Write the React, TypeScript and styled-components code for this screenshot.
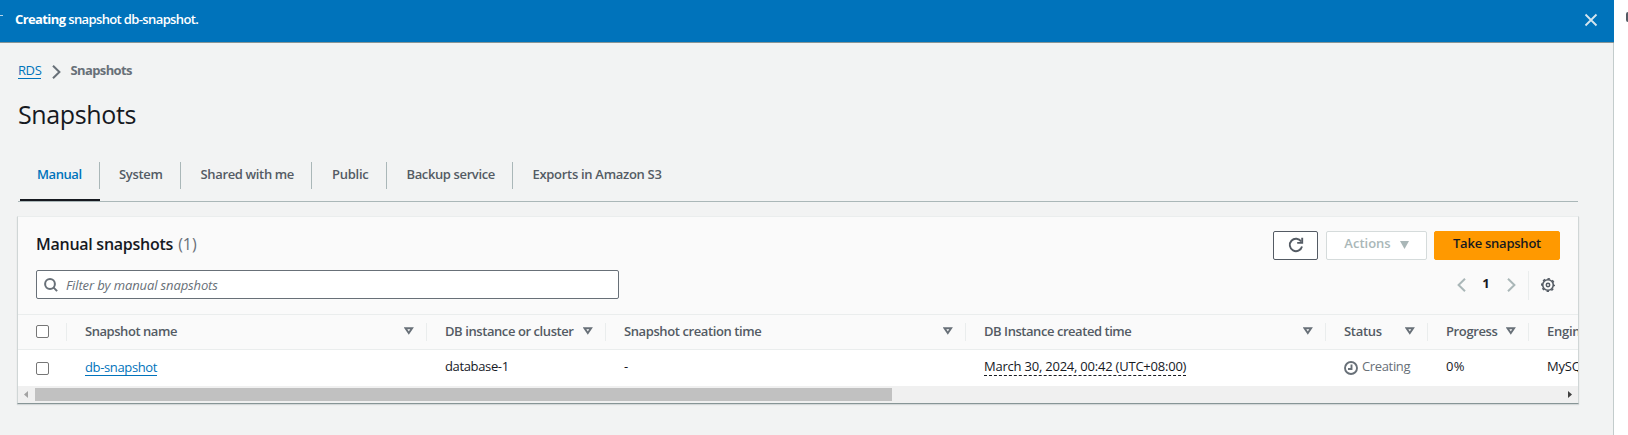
import React from "react";
import styled, { createGlobalStyle } from "styled-components";

const GlobalStyle = createGlobalStyle`
  * { box-sizing: border-box; }
  body {
    margin: 0;
    background: #fff;
    overflow: hidden;
    color: #16191f;
    font: 13px/20px "Open Sans", "Noto Sans", sans-serif;
  }
  svg { display: block; flex: none; }
`;

const Screen = styled.div`
  display: flex;
  width: 1628px;
  height: 435px;
  overflow: hidden;
`;

const Main = styled.main`
  width: 1614px;
  height: 435px;
  background: #f2f3f3;
  flex: none;
`;

const ToolRail = styled.aside`
  flex: 1;
  overflow: hidden;
  padding: 12px 0 0 12px;
`;

const Flash = styled.div`
  display: flex;
  align-items: center;
  justify-content: space-between;
  height: 43px;
  padding: 0 16px 3px 0;
  background: #0073bb;
  border-bottom: 1px solid #879596;
  color: #fff;
`;

const FlashMessage = styled.div`
  display: flex;
  align-items: center;
  padding-bottom: 1px;
`;

const Content = styled.div`
  height: 392px;
  padding: 17px 35px 0 17px;
  border-right: 1px solid #c3cccc;
`;

const Label = styled.span<{ $ls?: number; $weight?: number }>`
  letter-spacing: ${(p) => p.$ls ?? 0}px;
  font-weight: ${(p) => p.$weight ?? 400};
  white-space: pre;
`;

const Link = styled.a<{ $ls?: number }>`
  display: inline-block;
  height: 19px;
  letter-spacing: ${(p) => p.$ls ?? 0}px;
  color: #0073bb;
  line-height: 20px;
  text-decoration: none;
  border-bottom: 1px solid #0073bb;
`;

const Breadcrumbs = styled.nav`
  display: flex;
  align-items: flex-start;
  height: 20px;
  padding-left: 1px;
  color: #687078;
`;

const Separator = styled.span`
  padding: 5px 9px 0 11px;
`;

const Title = styled.h1`
  margin: 17px 0 0 1px;
  font-size: 25px;
  font-weight: 400;
  line-height: 34px;
  letter-spacing: -0.37px;
`;

const Tabs = styled.div`
  display: flex;
  align-items: flex-start;
  height: 51px;
  margin: 20px 0 0 1px;
  padding: 11px 0 0 2px;
  border-bottom: 1px solid #aab7b8;
`;

const Tab = styled.div<{ $width: number; $active?: boolean }>`
  width: ${(p) => p.$width}px;
  height: 39px;
  color: ${(p) => (p.$active ? "#0073bb" : "#545b64")};
  border-bottom: ${(p) => (p.$active ? "2px solid #16191f" : "none")};
`;

const TabFace = styled.div<{ $pad: number; $last?: boolean }>`
  height: 27px;
  padding-left: ${(p) => p.$pad}px;
  line-height: 24px;
  border-right: ${(p) => (p.$last ? "none" : "1px solid #aab7b8")};
`;

const Card = styled.section`
  width: 1562px;
  height: 188px;
  margin-top: 14px;
  background: #fafafa;
  border: 1px solid #d0d6d6;
  border-top-color: #eaeded;
  border-bottom-color: #879596;
  box-shadow: 0 1px 1px rgba(0, 28, 36, 0.12);
`;

const HeaderRow = styled.div<{ $height: number }>`
  display: flex;
  justify-content: space-between;
  align-items: flex-start;
  height: ${(p) => p.$height}px;
  padding: 0 18px 0 18px;
`;

const CardTitle = styled.h2`
  margin: 15px 0 0 0;
  font-size: 16px;
  line-height: 24px;
  font-weight: 600;
`;

const Count = styled.span`
  margin-left: 1px;
  color: #687078;
  font-weight: 400;
`;

const Actions = styled.div`
  display: flex;
  padding-top: 14px;
`;

const Button = styled.button<{ $width: number; $kind?: "primary" | "disabled"; $gap?: number }>`
  display: flex;
  align-items: center;
  justify-content: center;
  gap: 9px;
  width: ${(p) => p.$width}px;
  height: 29px;
  margin-left: ${(p) => p.$gap ?? 0}px;
  padding: 0 0 5px;
  font: inherit;
  border-radius: 2px;
  background: ${(p) => (p.$kind === "primary" ? "#ff9900" : "#fff")};
  border: 1px solid
    ${(p) => (p.$kind === "primary" ? "#ff9900" : p.$kind === "disabled" ? "#d5dbdb" : "#545b64")};
  color: ${(p) => (p.$kind === "primary" ? "#16191f" : p.$kind === "disabled" ? "#aab7b8" : "#545b64")};
`;

const ButtonIcon = styled.span<{ $drop: number }>`
  padding-top: ${(p) => p.$drop}px;
`;

const Search = styled.div`
  display: flex;
  align-items: center;
  gap: 8px;
  width: 583px;
  height: 29px;
  padding: 0 0 0 7px;
  border: 1px solid #687078;
  border-radius: 2px;
  background: #fff;
  color: #687078;
  font-style: italic;
`;

const Pager = styled.div`
  display: flex;
  align-items: center;
  height: 30px;
  padding-right: 5px;
`;

const PageNumber = styled.span`
  width: 41px;
  padding: 0 1px 4px 0;
  text-align: center;
  font-weight: 700;
`;

const PagerRule = styled.span`
  width: 1px;
  height: 29px;
  margin: 0 12px 0 12px;
  background: #eaeded;
`;

const TableRow = styled.div<{ $head?: boolean }>`
  display: flex;
  align-items: center;
  height: ${(p) => (p.$head ? 35 : 36)}px;
  overflow: hidden;
  background: ${(p) => (p.$head ? "#fafafa" : "#fff")};
  color: ${(p) => (p.$head ? "#545b64" : "#16191f")};
  border-top: ${(p) => (p.$head ? "1px solid #eaeded" : "none")};
`;

const Cell = styled.div<{ $width: number; $head?: boolean }>`
  display: flex;
  flex: none;
  align-items: center;
  justify-content: space-between;
  width: ${(p) => p.$width}px;
  height: ${(p) => (p.$head ? 18 : 36)}px;
  padding: ${(p) => (p.$head ? "0 12px 2px 18px" : "0 12px 4px 18px")};
  border-right: ${(p) => (p.$head ? "1px solid #eaeded" : "none")};
`;

const Body = styled.div`
  border-top: 1px solid #eaeded;
`;

const Checkbox = styled.span<{ $drop?: number }>`
  display: block;
  flex: none;
  width: 13px;
  height: 13px;
  margin-top: ${(p) => p.$drop ?? 0}px;
  border: 1px solid #767676;
  border-radius: 2px;
  background: #fff;
`;

const Dashed = styled.span`
  height: 20px;
  letter-spacing: -0.22px;
  border-bottom: 1px dashed #16191f;
  white-space: nowrap;
`;

const Status = styled.div`
  display: flex;
  align-items: center;
  gap: 4px;
  color: #687078;
`;

const StatusIcon = styled.span`
  padding-top: 3px;
`;

const Scrollbar = styled.div`
  display: flex;
  align-items: center;
  justify-content: space-between;
  height: 17px;
  padding: 0 6px;
  background: #f0f0f0;
`;

const Thumb = styled.div`
  width: 857px;
  height: 13px;
  margin: 0 auto 0 7px;
  background: #c1c1c1;
`;

const Chevron = ({ left, color }: { left?: boolean; color: string }) => (
  <svg width="9" height="14" viewBox="0 0 9 14" fill="none" stroke={color} strokeWidth="2">
    <path d={left ? "M8 .8 1.6 7 8 13.2" : "M1 .8 7.4 7 1 13.2"} />
  </svg>
);

const SortIcon = () => (
  <svg width="10" height="8" viewBox="0 0 10 8" fill="none" stroke="#687078" strokeWidth="1.9">
    <path d="M1.500 1.200h6.600L4.800 6Z" />
  </svg>
);

const CloseIcon = () => (
  <svg width="14" height="14" viewBox="0 0 14 14" stroke="#d5e5ee" strokeWidth="1.8">
    <path d="M1.500 1.500l11 11M12.500 1.500l-11 11" />
  </svg>
);

const RefreshIcon = () => (
  <svg width="16" height="16" viewBox="0 0 16 16" fill="none" stroke="#545b64" strokeWidth="1.9">
    <path d="M14 9.500A6.200 6.200 0 1 1 13.200 4.600" />
    <path d="M14.200 .8v5.100H9.200" />
  </svg>
);

const SearchIcon = () => (
  <svg width="14" height="14" viewBox="0 0 14 14" fill="none" stroke="#687078" strokeWidth="2">
    <circle cx="6" cy="6" r="4.900" />
    <path d="M9.400 9.400l3.700 3.700" />
  </svg>
);

const GearIcon = () => (
  <svg width="14" height="14" viewBox="0 0 14 14" fill="none" stroke="#545b64">
    <circle cx="7" cy="7" r="5.300" strokeWidth="1.600" />
    <circle cx="7" cy="7" r="6.300" strokeWidth="1.400" strokeDasharray="2.474 2.474" strokeDashoffset="1.237" />
    <circle cx="7" cy="7" r="1.700" strokeWidth="1.500" />
  </svg>
);

const PendingIcon = () => (
  <svg width="14" height="14" viewBox="0 0 14 14" fill="none" stroke="#687078" strokeWidth="1.900">
    <circle cx="7" cy="7" r="6" />
    <path d="M7.500 3.500V8H4" />
  </svg>
);

const tabs = [
  { name: "Manual", width: 80, ls: -0.42, pad: 17 },
  { name: "System", width: 81, ls: -0.33, pad: 19 },
  { name: "Shared with me", width: 131, ls: -0.35, pad: 19.5 },
  { name: "Public", width: 75, ls: -0.25, pad: 20 },
  { name: "Backup service", width: 126, ls: -0.38, pad: 19.5 },
  { name: "Exports in Amazon S3", width: 180, ls: -0.3, pad: 19.5 },
];

const columns = [
  { name: "Snapshot name", width: 360, ls: -0.45 },
  { name: "DB instance or cluster", width: 179, ls: -0.42 },
  { name: "Snapshot creation time", width: 360, ls: -0.4 },
  { name: "DB Instance created time", width: 360, ls: -0.45 },
  { name: "Status", width: 102, ls: -0.3 },
  { name: "Progress", width: 101, ls: -0.38 },
  { name: "Engine", width: 120, ls: -0.25 },
];

export default function App() {
  return (
    <>
      <GlobalStyle />
      <Screen>
        <Main>
          <Flash>
            <FlashMessage>
              <svg width="15" height="14" viewBox="0 0 15 14" stroke="#b3d5eb">
                <path d="M0 3.500h3" />
              </svg>
              <Label $weight={700} $ls={-0.6}>Creating</Label>
              <Label $weight={600} $ls={-0.62}> snapshot db-snapshot.</Label>
            </FlashMessage>
            <CloseIcon />
          </Flash>
          <Content>
            <Breadcrumbs>
              <Link href="#" $ls={-0.4}>RDS</Link>
              <Separator><Chevron color="#687078" /></Separator>
              <Label $weight={700} $ls={-0.6}>Snapshots</Label>
            </Breadcrumbs>
            <Title>Snapshots</Title>
            <Tabs>
              {tabs.map((t, i) => (
                <Tab key={t.name} $width={t.width} $active={i === 0}>
                  <TabFace $pad={t.pad} $last={i === tabs.length - 1}>
                    <Label $weight={600} $ls={t.ls}>{t.name}</Label>
                  </TabFace>
                </Tab>
              ))}
            </Tabs>
            <Card>
              <HeaderRow $height={53}>
                <CardTitle>
                  <Label $weight={600} $ls={-0.27}>Manual snapshots</Label> <Count>(1)</Count>
                </CardTitle>
                <Actions>
                  <Button $width={45}>
                    <ButtonIcon $drop={4}><RefreshIcon /></ButtonIcon>
                  </Button>
                  <Button $width={101} $kind="disabled" $gap={8}>
                    <Label $weight={600}>Actions</Label>
                    <ButtonIcon $drop={4}>
                      <svg width="9" height="8" viewBox="0 0 9 8" fill="#aab7b8"><path d="M0 0h9L4.500 8Z" /></svg>
                    </ButtonIcon>
                  </Button>
                  <Button $width={126} $kind="primary" $gap={7}>
                    <Label $weight={600} $ls={-0.24}>Take snapshot</Label>
                  </Button>
                </Actions>
              </HeaderRow>
              <HeaderRow $height={44}>
                <Search>
                  <SearchIcon />
                  <Label $ls={-0.12}>Filter by manual snapshots</Label>
                </Search>
                <Pager>
                  <Chevron left color="#aab7b8" />
                  <PageNumber>1</PageNumber>
                  <Chevron color="#aab7b8" />
                  <PagerRule />
                  <GearIcon />
                </Pager>
              </HeaderRow>
              <TableRow $head>
                <Cell $width={49} $head><Checkbox /></Cell>
                {columns.map((c) => (
                  <Cell key={c.name} $width={c.width} $head>
                    <Label $weight={600} $ls={c.ls}>{c.name}</Label>
                    <SortIcon />
                  </Cell>
                ))}
              </TableRow>
              <Body>
                <TableRow>
                  <Cell $width={49}><Checkbox $drop={5} /></Cell>
                  <Cell $width={360}><Link href="#" $ls={-0.36}>db-snapshot</Link></Cell>
                  <Cell $width={179}><Label $ls={-0.36}>database-1</Label></Cell>
                  <Cell $width={360}>-</Cell>
                  <Cell $width={360}><Dashed>March 30, 2024, 00:42 (UTC+08:00)</Dashed></Cell>
                  <Cell $width={102}>
                    <Status>
                      <StatusIcon><PendingIcon /></StatusIcon>
                      <Label $ls={-0.35}>Creating</Label>
                    </Status>
                  </Cell>
                  <Cell $width={101}><Label $ls={0.3}>0%</Label></Cell>
                  <Cell $width={120}><Label $ls={-0.2}>MySQL</Label></Cell>
                </TableRow>
              </Body>
              <Scrollbar>
                <svg width="4" height="7" viewBox="0 0 4 7" fill="#a3a3a3"><path d="M4 0v7L0 3.500Z" /></svg>
                <Thumb />
                <svg width="4" height="7" viewBox="0 0 4 7" fill="#404040"><path d="M0 0v7L4 3.500Z" /></svg>
              </Scrollbar>
            </Card>
          </Content>
        </Main>
        <ToolRail>
          <svg width="12" height="10" viewBox="0 0 12 10" fill="none" stroke="#545b64" strokeWidth="2">
            <rect x="1" y="1" width="12" height="8" rx="1" />
          </svg>
        </ToolRail>
      </Screen>
    </>
  );
}
